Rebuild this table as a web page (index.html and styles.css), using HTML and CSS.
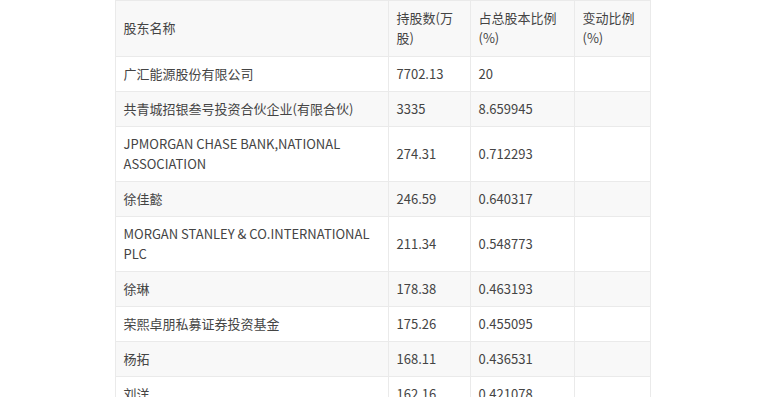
FILE: index.html
```html
<!DOCTYPE html>
<html lang="zh-CN">
<head>
    <meta charset="UTF-8">
    <meta name="viewport" content="width=device-width, initial-scale=1.0">
    <title>十大流通股东</title>
    <link rel="stylesheet" href="styles.css">
</head>
<body>

    <!-- Shareholder table -->
    <table class="holders">
        <colgroup>
            <col class="col-name">
            <col class="col-shares">
            <col class="col-ratio">
            <col class="col-change">
        </colgroup>
        <thead>
            <tr>
                <th>股东名称</th>
                <th>持股数(万股)</th>
                <th>占总股本比例(%)</th>
                <th>变动比例(%)</th>
            </tr>
        </thead>
        <tbody>
            <tr><td>广汇能源股份有限公司</td><td>7702.13</td><td>20</td><td></td></tr>
            <tr><td>共青城招银叁号投资合伙企业(有限合伙)</td><td>3335</td><td>8.659945</td><td></td></tr>
            <tr><td>JPMORGAN CHASE BANK,NATIONAL ASSOCIATION</td><td>274.31</td><td>0.712293</td><td></td></tr>
            <tr><td>徐佳懿</td><td>246.59</td><td>0.640317</td><td></td></tr>
            <tr><td>MORGAN STANLEY &amp; CO.INTERNATIONAL PLC</td><td>211.34</td><td>0.548773</td><td></td></tr>
            <tr><td>徐琳</td><td>178.38</td><td>0.463193</td><td></td></tr>
            <tr><td>荣熙卓朋私募证券投资基金</td><td>175.26</td><td>0.455095</td><td></td></tr>
            <tr><td>杨拓</td><td>168.11</td><td>0.436531</td><td></td></tr>
            <tr><td>刘洋</td><td>162.16</td><td>0.421078</td><td></td></tr>
        </tbody>
    </table>

</body>
</html>
```

FILE: styles.css
```css
/* General Styles */
* {
    margin: 0;
    padding: 0;
    box-sizing: border-box;
}
body {
    background: #fff;
    color: #444;
    font-family: "Noto Sans CJK SC", sans-serif;
    font-size: 13px;
}

/* Table */
.holders {
    width: 535px;
    margin: 0 auto;
    border-collapse: collapse;
    table-layout: fixed;
}
.col-name {
    width: 273px;
}
.col-shares {
    width: 82px;
}
.col-ratio {
    width: 104px;
}
.col-change {
    width: 76px;
}
.holders th,
.holders td {
    border: 1px solid #eaeaea;
    padding: 7px 8px;
    line-height: 20px;
    text-align: left;
    vertical-align: middle;
    font-weight: normal;
}
.holders th {
    padding: 7px 8px 8px;
    background: #f8f8f8;
}
.holders tbody tr:nth-child(even) {
    background: #f8f8f8;
}
```
